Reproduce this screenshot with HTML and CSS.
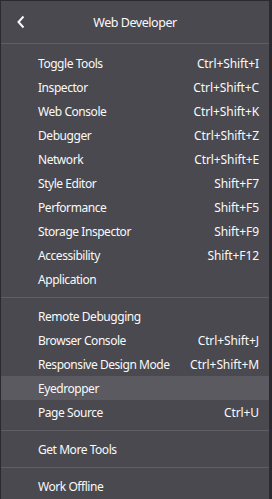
FILE: index.html
```html
<!DOCTYPE html>
<html>
<head>
<meta charset="utf-8">
<link rel="stylesheet" href="styles.css">
</head>
<body>
<div class="panel">
  <div class="header">
    <svg class="back" width="10" height="14" viewBox="0 0 10 14"><path d="M7.5 1.5 L2.5 7 L7.5 12.5" fill="none" stroke="#f9f9fa" stroke-width="2"/></svg>
    <div class="title">Web Developer</div>
  </div>
  <div class="section first">
    <div class="item"><span>Toggle Tools</span><span class="key">Ctrl+Shift+I</span></div>
    <div class="item"><span>Inspector</span><span class="key">Ctrl+Shift+C</span></div>
    <div class="item"><span>Web Console</span><span class="key">Ctrl+Shift+K</span></div>
    <div class="item"><span>Debugger</span><span class="key">Ctrl+Shift+Z</span></div>
    <div class="item"><span>Network</span><span class="key">Ctrl+Shift+E</span></div>
    <div class="item"><span>Style Editor</span><span class="key">Shift+F7</span></div>
    <div class="item"><span>Performance</span><span class="key">Shift+F5</span></div>
    <div class="item"><span>Storage Inspector</span><span class="key">Shift+F9</span></div>
    <div class="item"><span>Accessibility</span><span class="key">Shift+F12</span></div>
    <div class="item"><span>Application</span></div>
  </div>
  <div class="section">
    <div class="item"><span>Remote Debugging</span></div>
    <div class="item"><span>Browser Console</span><span class="key">Ctrl+Shift+J</span></div>
    <div class="item"><span>Responsive Design Mode</span><span class="key">Ctrl+Shift+M</span></div>
    <div class="item hover"><span>Eyedropper</span></div>
    <div class="item"><span>Page Source</span><span class="key">Ctrl+U</span></div>
  </div>
  <div class="section">
    <div class="item"><span>Get More Tools</span></div>
  </div>
  <div class="section last">
    <div class="item"><span>Work Offline</span></div>
  </div>
</div>
</body>
</html>
```
FILE: styles.css
```css
html, body {
  margin: 0;
  padding: 0;
  background: #4a494f;
}
body {
  font-family: "Noto Sans", "Open Sans", sans-serif;
  font-size: 12px;
  letter-spacing: -0.45px;
  color: #f9f9fa;
}
.panel {
  width: 272px;
  height: 499px;
  background: #4a494f;
  border-top: 1px solid #2b2a30;
  border-left: 1px solid #2b2a30;
  border-right: 3px solid #2b2a30;
  box-sizing: border-box;
  overflow: hidden;
}
.header {
  height: 42px;
  display: flex;
  align-items: center;
  position: relative;
  border-bottom: 1px solid #5f5e64;
}
.back {
  margin-left: 15px;
}
.title {
  position: absolute;
  left: 0;
  right: 0;
  text-align: center;
  font-size: 12.5px;
  pointer-events: none;
}
.section {
  padding: 6px 0;
  border-bottom: 1px solid #5f5e64;
}
.section.first {
  padding-top: 7px;
}
.section.last {
  border-bottom: none;
}
.item {
  height: 24px;
  display: flex;
  align-items: center;
  justify-content: space-between;
  padding: 0 10px 0 37px;
}
.key {
  letter-spacing: -0.1px;
}
.item.hover {
  background: #5b5a60;
}
```
